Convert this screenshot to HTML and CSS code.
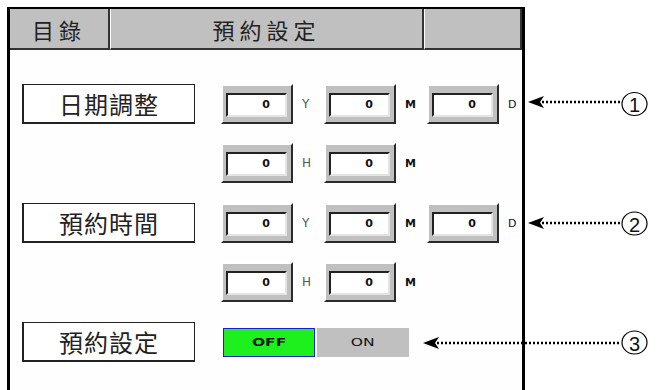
FILE: index.html
```html
<!DOCTYPE html>
<html lang="zh-Hant">
<head>
  <meta charset="UTF-8" />
  <meta name="viewport" content="width=device-width, initial-scale=1" />
  <title>預約設定</title>
  <link rel="stylesheet" href="styles.css">
</head>
<body>
  <!-- Reservation settings panel -->
  <section class="panel">
    <div class="panel-header">
      <div class="tab">目錄</div>
      <div class="tab">預約設定</div>
      <div class="tab"></div>
    </div>

    <div class="panel-body">
      <!-- Date adjustment -->
      <div class="group">
        <div class="label-box">日期調整</div>
        <div class="fields">
          <div class="field-row">
            <div class="field"><span class="value">0</span></div>
            <span class="unit unit-thin">Y</span>
            <div class="field"><span class="value">0</span></div>
            <span class="unit unit-bold">M</span>
            <div class="field"><span class="value">0</span></div>
            <span class="unit">D</span>
          </div>
          <div class="field-row">
            <div class="field"><span class="value">0</span></div>
            <span class="unit unit-thin">H</span>
            <div class="field"><span class="value">0</span></div>
            <span class="unit unit-bold">M</span>
          </div>
        </div>
      </div>

      <!-- Reservation time -->
      <div class="group">
        <div class="label-box">預約時間</div>
        <div class="fields">
          <div class="field-row">
            <div class="field"><span class="value">0</span></div>
            <span class="unit unit-thin">Y</span>
            <div class="field"><span class="value">0</span></div>
            <span class="unit unit-bold">M</span>
            <div class="field"><span class="value">0</span></div>
            <span class="unit">D</span>
          </div>
          <div class="field-row">
            <div class="field"><span class="value">0</span></div>
            <span class="unit unit-thin">H</span>
            <div class="field"><span class="value">0</span></div>
            <span class="unit unit-bold">M</span>
          </div>
        </div>
      </div>

      <!-- Reservation on/off -->
      <div class="group">
        <div class="label-box">預約設定</div>
        <div class="toggle">
          <span class="toggle-btn toggle-off"><span class="toggle-text">OFF</span></span>
          <span class="toggle-btn toggle-on"><span class="toggle-text">ON</span></span>
        </div>
      </div>
    </div>
  </section>

  <!-- Callout arrows drawn over the panel -->
  <svg class="callouts" width="657" height="390" viewBox="0 0 657 390">
    <g class="callout">
      <path d="M528 102 L544 96 L540 102 L544 108 Z" />
      <line x1="542" y1="102" x2="621" y2="102" />
      <ellipse cx="634.5" cy="104" rx="12.5" ry="11.5" />
      <text x="634.5" y="105">1</text>
    </g>
    <g class="callout">
      <path d="M528 223 L544 217 L540 223 L544 229 Z" />
      <line x1="542" y1="223" x2="621" y2="223" />
      <ellipse cx="634.5" cy="223.5" rx="12.5" ry="11.5" />
      <text x="634.5" y="224.5">2</text>
    </g>
    <g class="callout">
      <path d="M423 343 L439 337 L435 343 L439 349 Z" />
      <line x1="437" y1="343" x2="621" y2="343" />
      <ellipse cx="634.5" cy="342.5" rx="12.5" ry="11.5" />
      <text x="634.5" y="343.5">3</text>
    </g>
  </svg>
</body>
</html>
```

FILE: styles.css
```css
/* Reset */
* {
  box-sizing: border-box;
  margin: 0;
  padding: 0;
}

body {
  position: relative;
  background: #fff;
  color: #222;
  font-family: "Noto Sans CJK TC", "Noto Sans CJK KR", sans-serif;
  overflow: hidden;
}

/* Outer panel */
.panel {
  width: 518px;
  height: 383px;
  margin: 7px 0 0 7px;
  border: 3px solid #000;
  border-top-width: 2px;
  border-bottom: none;
  background: #fefefe;
}

/* Header tabs */
.panel-header {
  display: grid;
  grid-template-columns: 100px 314px 98px;
  height: 41px;
}

.panel-header .tab {
  display: flex;
  align-items: center;
  justify-content: center;
  background: #c0c0c0;
  border-right: 2px solid #333;
  border-bottom: 2px solid #333;
  font-size: 22px;
  letter-spacing: 5px;
  line-height: 1;
}

.panel-header .tab + .tab {
  border-left: 1px solid #fff;
}

/* Body */
.panel-body {
  padding: 34px 0 0 12px;
}

.group {
  display: flex;
  align-items: flex-start;
  gap: 26px;
}

.group + .group {
  margin-top: 20px;
}

.label-box {
  flex-shrink: 0;
  width: 173px;
  height: 40px;
  display: flex;
  align-items: center;
  justify-content: center;
  background: #fff;
  border: 1px solid #222;
  border-left-width: 2px;
  border-bottom-width: 2px;
  font-size: 24px;
  letter-spacing: 1px;
  line-height: 1;
}

.fields {
  display: flex;
  flex-direction: column;
  gap: 19px;
}

.field-row {
  display: flex;
  align-items: center;
  height: 40px;
}

/* Bevelled number fields */
.field {
  flex-shrink: 0;
  width: 72px;
  height: 40px;
  padding: 5px 4px 3px 3px;
  background: #c0c0c0;
  border: 2px solid;
  border-color: #fff #2b2b2b #2b2b2b #fff;
}

.field .value {
  display: block;
  height: 24px;
  margin-top: 2px;
  padding-right: 15px;
  background: #fff;
  border: 2px solid;
  border-color: #222 #e4e4e4 #e4e4e4 #222;
  font-family: "DejaVu Sans", sans-serif;
  font-size: 11px;
  font-weight: bold;
  line-height: 20px;
  text-align: right;
  color: #111;
}

.unit {
  flex-shrink: 0;
  width: 31px;
  padding-left: 9px;
  font-family: "DejaVu Sans", sans-serif;
  font-size: 11px;
  color: #111;
}

.unit-thin {
  color: #555;
  font-size: 12px;
}

.unit-bold {
  font-weight: bold;
}

/* OFF / ON switch */
.toggle {
  display: flex;
  gap: 2px;
  height: 29px;
  margin: 6px 0 0 2px;
}

.toggle-btn {
  display: flex;
  align-items: center;
  justify-content: center;
  width: 92px;
  font-family: "DejaVu Sans", sans-serif;
  font-size: 10px;
  color: #111;
}

.toggle-off {
  background: #1ef01e;
  border: 1px solid #1c1cd8;
  font-weight: bold;
}

.toggle-on {
  background: #c0c0c0;
}

.toggle-text {
  display: inline-block;
  transform: scaleX(1.55);
}

/* Callout arrows */
.callouts {
  position: absolute;
  left: 0;
  top: 0;
  pointer-events: none;
}

.callout path {
  fill: #000;
}

.callout line {
  stroke: #000;
  stroke-width: 2.5;
  stroke-dasharray: 2 2;
}

.callout ellipse {
  fill: none;
  stroke: #000;
  stroke-width: 1.2;
}

.callout text {
  font-family: "Liberation Sans", sans-serif;
  font-size: 20px;
  text-anchor: middle;
  dominant-baseline: central;
  fill: #111;
}
```
